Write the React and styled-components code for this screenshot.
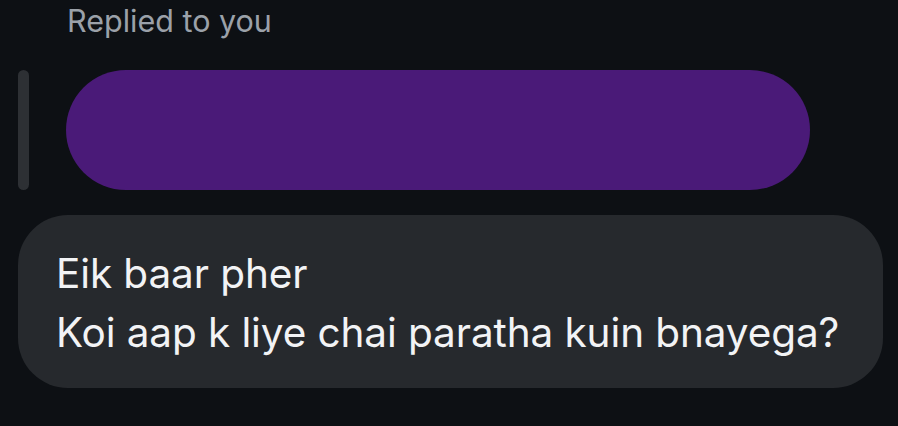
import React from "react";
import styled, { createGlobalStyle } from "styled-components";

const GlobalStyle = createGlobalStyle`
	html, body {
		margin: 0;
		padding: 0;
		background: #0d1014;
	}
	body {
		font-family: "Inter", "Noto Sans", sans-serif;
		-webkit-font-smoothing: antialiased;
	}
`;

function App() {
	return (
		<Page>
			<GlobalStyle />
			<ReplyLabel>Replied to you</ReplyLabel>
			<QuoteRow>
				<QuoteBar />
				<QuotedBubble />
			</QuoteRow>
			<Bubble>
				<Line>Eik baar pher</Line>
				<Line>Koi aap k liye chai paratha kuin bnayega?</Line>
			</Bubble>
		</Page>
	);
}

const Page = styled.div`
	width: 898px;
	height: 426px;
	display: flex;
	flex-direction: column;
	background: #0d1014;
	overflow: hidden;
`;

const ReplyLabel = styled.div`
	margin: 2px 0 0 67px;
	font-size: 30.5px;
	line-height: 38px;
	color: #9ba1a9;
`;

const QuoteRow = styled.div`
	display: flex;
	align-items: stretch;
	gap: 37px;
	margin: 30px 0 0 18px;
	height: 120px;
`;

const QuoteBar = styled.div`
	width: 11px;
	border-radius: 6px;
	background: #2d3034;
`;

const QuotedBubble = styled.div`
	width: 744px;
	border-radius: 60px;
	background: #4a1a78;
`;

const Bubble = styled.div`
	margin: 25px 0 0 18px;
	width: 865px;
	height: 173px;
	box-sizing: border-box;
	padding: 29px 0 0 38px;
	border-radius: 50px;
	background: #26292d;
	display: flex;
	flex-direction: column;
`;

const Line = styled.div`
	font-size: 40.5px;
	line-height: 59px;
	color: #f2f3f5;
	letter-spacing: -0.1px;
	white-space: nowrap;
`;

export default App;
